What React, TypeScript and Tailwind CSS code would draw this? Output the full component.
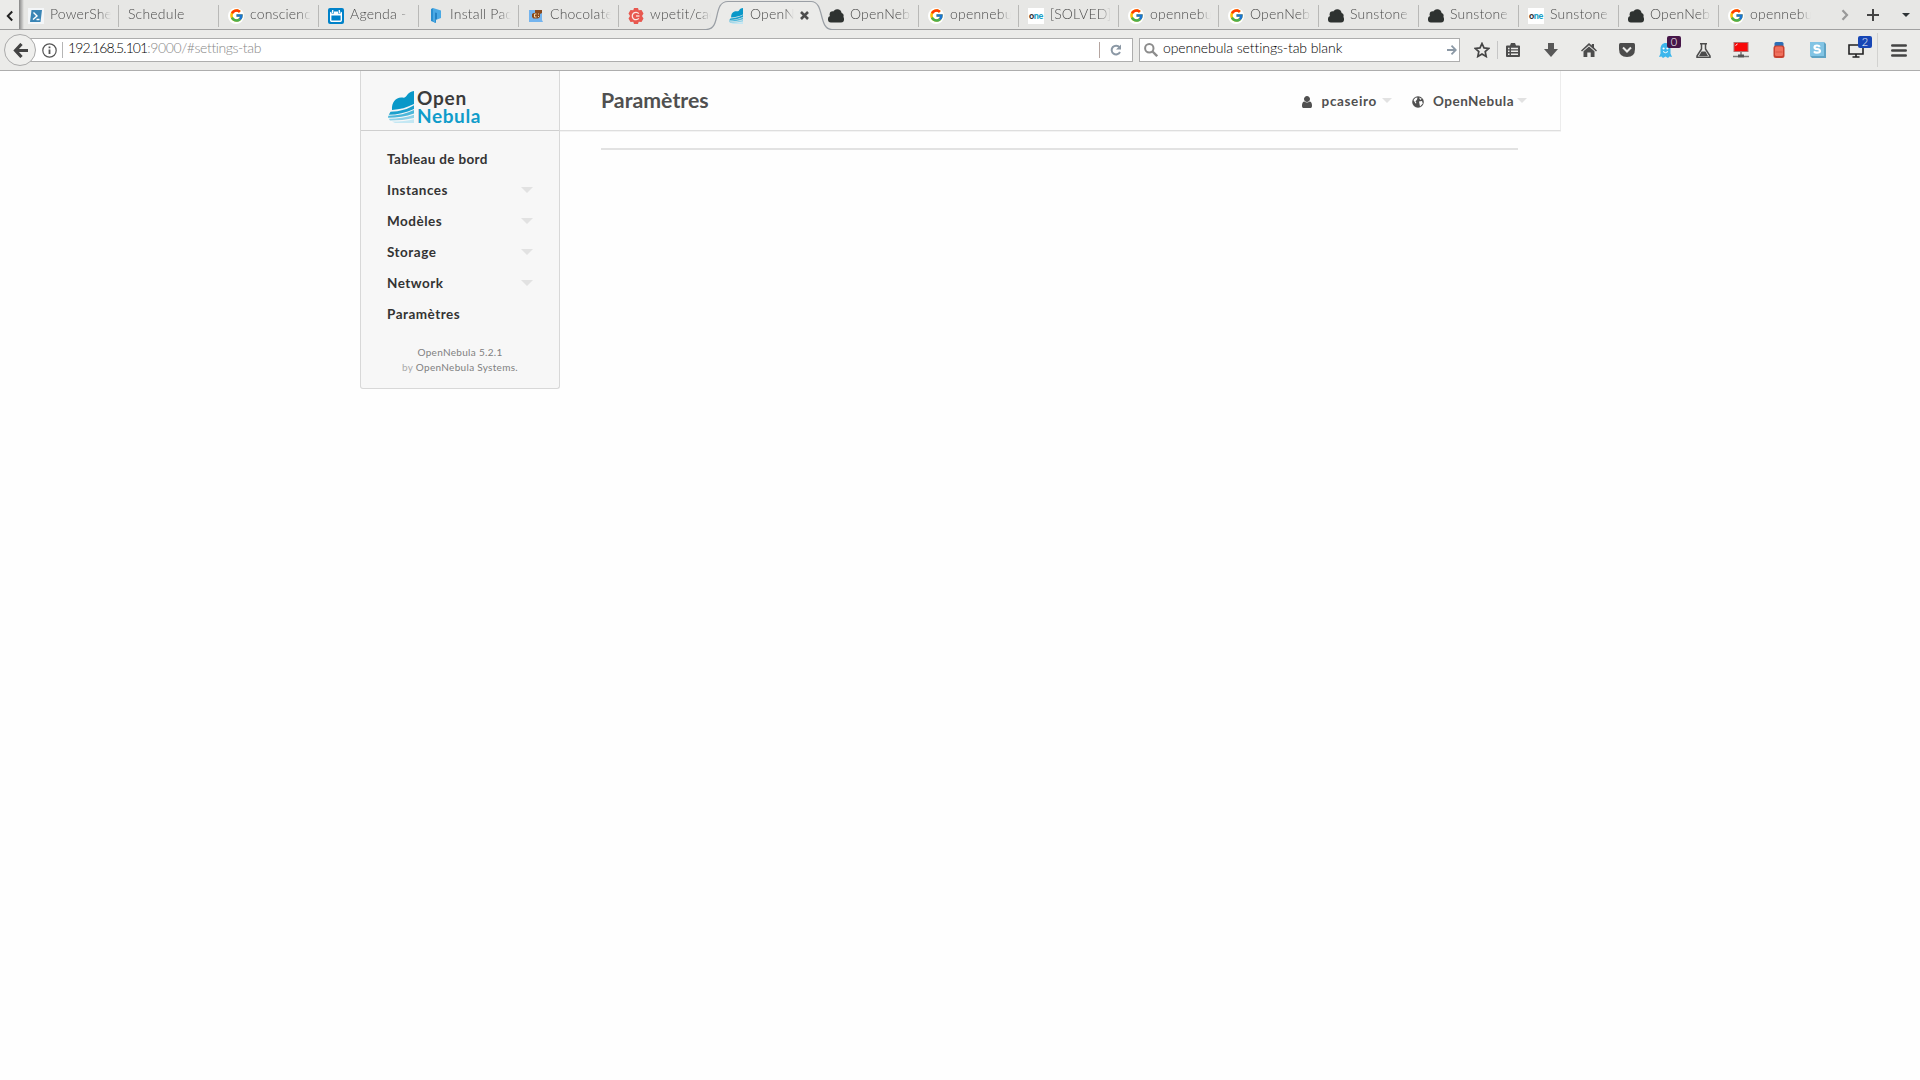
import React from "react";
import { FcGoogle } from "react-icons/fc";

type Tab = { title: string; icon?: string; active?: boolean };

const TABS: Tab[] = [
    { title: "PowerShell", icon: "powershell" },
    { title: "Schedule" },
    { title: "conscience", icon: "google" },
    { title: "Agenda - ", icon: "agenda" },
    { title: "Install Pack", icon: "puppet" },
    { title: "Chocolatey", icon: "choco" },
    { title: "wpetit/cad", icon: "hex" },
    { title: "OpenNeb", icon: "nebula", active: true },
    { title: "OpenNebu", icon: "cloud" },
    { title: "opennebul", icon: "google" },
    { title: "[SOLVED]", icon: "one" },
    { title: "opennebul", icon: "google" },
    { title: "OpenNebu", icon: "google" },
    { title: "Sunstone", icon: "cloud" },
    { title: "Sunstone", icon: "cloud" },
    { title: "Sunstone", icon: "one" },
    { title: "OpenNebu", icon: "cloud" },
    { title: "opennebul", icon: "google" },
];

const MENU = [
    { label: "Tableau de bord" },
    { label: "Instances", sub: true },
    { label: "Modèles", sub: true },
    { label: "Storage", sub: true },
    { label: "Network", sub: true },
    { label: "Paramètres" },
];

export default function App() {
    return (
        <div className="flex h-[1080px] w-[1920px] flex-col overflow-hidden bg-[#fefefe] font-['Lato',sans-serif]">
            <TabStrip />
            <NavBar />
            <Sunstone />
        </div>
    );
}

function TabStrip() {
    return (
        <div className="flex h-[30px] shrink-0 border-b border-[#a0a0a0] bg-[#e7e7e5]">
            <div className="flex w-[19px] shrink-0 items-center justify-center bg-[#ebebe9] pt-[2px]">
                <svg width="8" height="12" viewBox="0 0 8 12" fill="none" stroke="#222" strokeWidth="2">
                    <path d="M6.200 1.500 1.800 6l4.400 4.500" />
                </svg>
            </div>
            {TABS.map((tab, i) => (
                <TabItem key={i} tab={tab} index={i} />
            ))}
            <div className="flex flex-1 items-center pl-[22px] pt-px">
                <svg width="8" height="12" viewBox="0 0 8 12" fill="none" stroke="#999" strokeWidth="2.200">
                    <path d="M1.500 1.200 6 6l-4.500 4.800" />
                </svg>
                <svg className="ml-[18px]" width="12" height="12" viewBox="0 0 12 12" stroke="#444" strokeWidth="2">
                    <path d="M6 0v12M0 6h12" />
                </svg>
                <svg className="ml-[23px]" width="8" height="4" viewBox="0 0 8 4" fill="#2e3436">
                    <path d="M0 0h8L4 4z" />
                </svg>
            </div>
        </div>
    );
}

function TabItem({ tab, index }: { tab: Tab; index: number }) {
    const divider = !tab.active && TABS[index + 1] && !TABS[index + 1].active;
    return (
        <div className="relative flex h-[29px] w-[100px] shrink-0 items-center pl-[9px] pt-[2px]">
            {index === 0 && (
                <span className="absolute left-0 top-0 h-[29px] w-[5px] bg-linear-to-r from-[#858585] to-[#e7e7e5]" />
            )}
            {tab.active && (
                <svg className="absolute -left-[15px] top-0" width="132" height="30" viewBox="0 0 132 30">
                    <path d="M0 30V29.500H2C18 29.500 8 1.500 24 1.500H107C121 1.500 114 29.500 128 29.500H132V30Z" fill="#ebebe9" />
                    <path
                        d="M0 29.500H2C18 29.500 8 1.500 24 1.500H107C121 1.500 114 29.500 128 29.500H132"
                        fill="none"
                        stroke="#9a9fa5"
                        strokeWidth="1.200"
                    />
                </svg>
            )}
            {tab.icon && (
                <span className="relative mr-[6px] flex size-4 shrink-0 items-center justify-center">
                    <Favicon name={tab.icon} />
                </span>
            )}
            <span
                className={`relative -mt-[4px] overflow-hidden whitespace-nowrap text-[14px] leading-[20px] tracking-[0.2px] text-[#4c4c4c] font-light [mask-image:linear-gradient(to_right,black_80%,transparent)] ${
                    tab.active ? "w-[44px]" : tab.icon ? "w-[61px]" : "w-[80px]"
                }`}
            >
                {tab.title}
            </span>
            {tab.active && (
                <svg className="relative ml-[6px]" width="9" height="9" viewBox="0 0 9 9" stroke="#4c4c4c" strokeWidth="2.600">
                    <path d="M1 1l7 7M8 1l-7 7" />
                </svg>
            )}
            {divider && <span className="absolute right-0 top-[5px] h-[22px] w-px bg-[#b9b9b7]" />}
        </div>
    );
}

function Favicon({ name }: { name: string }) {
    switch (name) {
        case "google":
            return (
                <span className="flex size-4 items-center justify-center rounded-full bg-white">
                    <FcGoogle size={15} />
                </span>
            );
        case "cloud":
            return (
                <svg width="16" height="14" viewBox="0 0 16 14" fill="#2e3230">
                    <circle cx="9.300" cy="4.600" r="4.400" />
                    <circle cx="4.800" cy="5.500" r="3.200" />
                    <circle cx="13" cy="6.500" r="2.600" />
                    <rect x="0" y="7" width="16" height="6.500" rx="2.900" />
                </svg>
            );
        case "one":
            return (
                <span className="flex size-4 items-center justify-center bg-white text-[9px] font-black leading-none tracking-[-0.3px] text-[#333]">
                    o<span className="text-[#1a9fc6]">ne</span>
                </span>
            );
        case "powershell":
            return (
                <svg width="16" height="16" viewBox="0 0 16 16">
                    <path d="M0 0h16v16H0z" fill="#f4f6f8" />
                    <path d="M3.500 2H14l-1.500 12H2z" fill="#3a85b5" />
                    <path d="M5.500 4.500 9 8l-4 3.500M8.500 11.500h3" fill="none" stroke="#fff" strokeWidth="1.400" />
                </svg>
            );
        case "agenda":
            return (
                <svg width="16" height="16" viewBox="0 0 16 16">
                    <rect width="16" height="16" rx="2" fill="#0082c9" />
                    <rect x="2.700" y="4.200" width="10.600" height="9.100" rx="1" fill="none" stroke="#fff" strokeWidth="1.400" />
                    <path d="M2.500 4h11v3.500h-11z" fill="#fff" />
                    <path d="M4.700 2v3.500M11.300 2v3.500" stroke="#0082c9" strokeWidth="2.600" />
                    <path d="M4.700 2v3M11.300 2v3" stroke="#fff" strokeWidth="1.300" />
                </svg>
            );
        case "puppet":
            return (
                <svg width="12" height="15" viewBox="0 0 12 15">
                    <path d="M1 1l2-1v11l3 1v3l-5-2z" fill="#2a8fd0" />
                    <path d="M3 0l8 2.500V10l-4 1.500V6L5 5.500V15L3 13z" fill="#4aa9e4" />
                    <path d="M5 4.500l2 .5v6.500l-2 .5z" fill="#2583c4" />
                </svg>
            );
        case "choco":
            return (
                <svg width="14" height="14" viewBox="0 0 14 14">
                    <path d="M0 1h13v10l1 2H0z" fill="#74b4ee" />
                    <path d="M6 1h7v3l-2 1v3l-2 1.500H4.500L3 8V5l1.500-1H6z" fill="#8a4a1c" />
                    <path d="M7.500 5H5.500v3h2" fill="none" stroke="#f4d9a8" />
                    <path d="M9 4.500h1v1H9zM9 7h1v1H9z" fill="#f4d9a8" />
                </svg>
            );
        case "hex":
            return (
                <svg width="16" height="16" viewBox="0 0 16 16">
                    <path
                        d="M6 0h4l.7 2.200L13.500 2l2 3.500L14 8l1.500 2.500-2 3.500-2.800-.2L10 16H6l-.7-2.200L2.500 14l-2-3.500L2 8 .5 5.500l2-3.500 2.800.2z"
                        fill="#e8584f"
                    />
                    <path d="M10.800 5.600A3.700 3.700 0 1 0 10.800 10.400" fill="none" stroke="#fbe6e3" strokeWidth="1.300" />
                    <path d="M8 8h3.500" stroke="#fbe6e3" strokeWidth="1.300" />
                </svg>
            );
        default:
            return <NebulaMark width={14} height={16} />;
    }
}

function NebulaMark({ width, height }: { width: number; height: number }) {
    return (
        <svg className="shrink-0" width={width} height={height} viewBox="0 0 26 32" preserveAspectRatio="none">
            <path d="M4 19C3.500 11 8 6 14 6.500 17 7 18 6 19.500 3.500 21 1.500 23 .5 26 0V13C19 16.500 12 18.500 4 19z" fill="#0a98c8" />
            <path d="M2.500 20.800C12 20.300 20 18 26 14.200v3.700C18 21.800 9 23.500.8 23.800z" fill="#1ba0cd" />
            <path d="M.3 24.800C10 24.600 19 22.500 26 19v3.500C18 25.500 9 26.800 0 26.800z" fill="#4cb7da" />
            <path d="M.8 27.800C10 27.800 19 26.300 26 23.800v3.200C19 28.700 10 29.500 2 29.500z" fill="#8dd1e8" />
            <path d="M4 30.500C12 30.500 20 29.800 26 28.200V32H7z" fill="#c3e7f3" />
        </svg>
    );
}

function NavBar() {
    return (
        <div className="relative flex h-[41px] shrink-0 items-start border-b border-[#adadad] bg-[#ebebe9] pl-[30px] pt-[8px]">
            <span className="absolute left-[4px] top-[4px] z-10 flex size-[32px] items-center justify-center rounded-full border border-[#aaa] bg-[#efefed]">
                <svg width="15" height="15" viewBox="0 0 15 15" fill="none" stroke="#444" strokeWidth="3.200">
                    <path d="M8.500 1 2.500 7.500l6 6.500M2.500 7.500H15" />
                </svg>
            </span>

            {/* Barre d'adresse */}
            <div className="flex h-[24px] w-[1103px] items-center border border-[#adadad] bg-white pl-[11px]">
                <svg width="15" height="15" viewBox="0 0 15 15" fill="none" stroke="#555">
                    <circle cx="7.500" cy="7.500" r="6.700" strokeWidth="1.200" />
                    <path d="M7.500 6.500V11M7.500 3.500v1.700" strokeWidth="1.800" />
                </svg>
                <span className="ml-[5px] h-[16px] w-px bg-[#b5b5b5]" />
                <span className="-mt-[5px] ml-[5px] whitespace-nowrap text-[14px] font-light leading-[20px] tracking-[-0.9px] text-black">
                    192.168.5.101<span className="tracking-[-0.4px] text-[#888]">:9000/#settings-tab</span>
                </span>
                <span className="ml-auto h-[16px] w-px bg-[#b5a5a0]" />
                <svg className="ml-[10px] mr-[10px]" width="12" height="12" viewBox="0 0 12 12" fill="none" stroke="#8b98a5" strokeWidth="2">
                    <path d="M9.500 3.300A4.400 4.400 0 1 0 10 8" />
                    <path d="M11 .5v5H6z" fill="#8b98a5" stroke="none" />
                </svg>
            </div>

            {/* Recherche */}
            <div className="ml-[6px] flex h-[24px] w-[321px] items-center border border-[#adadad] bg-white pl-[4px]">
                <svg width="14" height="14" viewBox="0 0 14 14" fill="none" stroke="#8c8c8c" strokeWidth="2">
                    <circle cx="5.300" cy="5.300" r="4.200" />
                    <path d="M8.500 8.500l4.700 4.700" strokeWidth="2.400" />
                </svg>
                <span className="-mt-[5px] ml-[5px] whitespace-nowrap text-[14px] font-light leading-[20px] tracking-[-0.080px] text-black">
                    opennebula settings-tab blank
                </span>
                <svg className="ml-auto mr-[2px]" width="10" height="10" viewBox="0 0 10 10" fill="none" stroke="#8b98a5" strokeWidth="1.800">
                    <path d="M0 5h8.500M4.500.7 8.800 5 4.500 9.300" />
                </svg>
            </div>

            <Toolbar />
        </div>
    );
}

function Toolbar() {
    return (
        <div className="flex h-[24px] items-center">
            <svg className="ml-[14px]" width="16" height="16" viewBox="0 0 16 16" fill="none" stroke="#444" strokeWidth="1.700">
                <path d="M8 1.500l2 4.400 4.800.5-3.600 3.200 1 4.900L8 12l-4.200 2.500 1-4.900L1.200 6.400 6 5.900z" />
            </svg>
            <span className="ml-[7px] h-[18px] w-px bg-[#c6c6c6]" />
            <svg className="ml-[8px]" width="14" height="14" viewBox="0 0 14 14">
                <path d="M1 2.500h3L5 0h4l1 2.500h3q1 0 1 1V13q0 1-1 1H1q-1 0-1-1V3.500q0-1 1-1z" fill="#4c4c4c" />
                <path d="M2 5.500h1.500M5 5.500h7M2 8.300h1.500M5 8.300h7M2 11.200h1.500M5 11.200h7" stroke="#ebebe9" strokeWidth="1.500" />
            </svg>
            <svg className="ml-[24px]" width="14" height="14" viewBox="0 0 14 14" fill="#585858">
                <path d="M4 0h6v6h4l-7 8-7-8h4z" />
            </svg>
            <svg className="ml-[23px]" width="16" height="14" viewBox="0 0 16 14" fill="#4c4c4c">
                <path d="M8 0l2.800 2.500V1H13v3.500l3 3-1 1L8 2.300 1 8.500l-1-1z" />
                <path d="M2.500 8.300 8 3.500l5.500 4.800V14H9.700V9.500H6.300V14H2.500z" />
            </svg>
            <svg className="ml-[22px]" width="16" height="14" viewBox="0 0 16 14">
                <path d="M1.500 0h13Q16 0 16 1.500V6q0 8-8 8T0 6V1.500Q0 0 1.500 0z" fill="#4c4c4c" />
                <path d="M4 4.500l4 4 4-4" fill="none" stroke="#ebebe9" strokeWidth="2" />
            </svg>
            <span className="relative ml-[24px] h-[15px] w-[13px]">
                <svg width="13" height="15" viewBox="0 0 13 15">
                    <path d="M1.500 6C1.500-2 11.500-2 11.500 6v4.500L13 14l-2.500-.5L9 15l-2.500-1.500L4 15l-1.500-1.500L0 14l1.500-3.500z" fill="#3cb6ec" />
                    <circle cx="4.600" cy="5.500" r="1.100" fill="#fff" />
                    <circle cx="8.400" cy="5.500" r="1.100" fill="#fff" />
                    <path d="M4 8.500q2.500 2.500 5 0" stroke="#fff" fill="none" />
                </svg>
                <Badge text="0" className="left-[8px] bg-[#461648]" />
            </span>
            <svg className="ml-[24px]" width="15" height="15" viewBox="0 0 15 15" fill="none" stroke="#4c4c4c" strokeWidth="1.500">
                <path d="M4 .8h7M5.500 1v5L1 13v1.200h13V13L9.500 6V1" />
                <path d="M3 13l2.500-4.500h4L12 13z" fill="#4c4c4c" stroke="none" />
            </svg>
            <svg className="ml-[22px]" width="16" height="16" viewBox="0 0 16 16">
                <rect x="1" y=".5" width="14" height="9" fill="#f80808" stroke="#b07070" />
                <path d="M2.500 3.500 4.500 2" stroke="#fff" />
                <path d="M8 10v3M0 14.500h5M11 14.500h5" stroke="#777" strokeWidth="1.500" />
                <path d="M5 12.500h6v3H5z" fill="#555" />
            </svg>
            <svg className="ml-[24px]" width="12" height="16" viewBox="0 0 12 16">
                <rect x="1.500" y="0" width="9" height="5" rx="1.500" fill="#2d6eb5" />
                <rect x=".5" y="3.500" width="11" height="12.500" rx="2.500" fill="#c8402f" />
                <rect x="2" y="4.500" width="8" height="9.500" rx="1.500" fill="#f0705d" />
                <path d="M2.500 10h7" stroke="#dc5443" />
            </svg>
            <svg className="ml-[25px]" width="16" height="16" viewBox="0 0 16 16">
                <path d="M0 0h14l2 2v14H2l-2-2z" fill="#5fa3c4" />
                <path d="M0 0h14v14H0z" fill="#82c4e4" />
                <path d="M9.800 4.800Q9 3.500 7 3.500q-2.500 0-2.500 1.700T7 7q3 .3 3 2t-3 1.700q-2 0-3-1.400" fill="none" stroke="#fff" strokeWidth="2.200" />
            </svg>
            <span className="relative ml-[22px] h-[15px] w-[16px]">
                <svg width="16" height="15" viewBox="0 0 16 15" fill="none" stroke="#222" strokeWidth="1.600">
                    <path d="M1 2h14v9H1zM8 11v3M4.500 14h7" />
                </svg>
                <Badge text="2" className="left-[10px] bg-[#1746b5]" />
            </span>
            <span className="ml-[13px] h-[34px] w-px bg-[#d2d2d0]" />
            <svg className="ml-[13px]" width="16" height="13" viewBox="0 0 16 13" stroke="#444" strokeWidth="2.600" strokeLinecap="round">
                <path d="M1.300 1.500h13.400M1.300 6.500h13.400M1.300 11.500h13.400" />
            </svg>
        </div>
    );
}

function Badge({ text, className }: { text: string; className: string }) {
    return (
        <span
            className={`absolute -top-[7px] flex h-[12px] w-[14px] items-center justify-center rounded-[2px] text-[11px] font-light leading-none text-white ${className}`}
        >
            {text}
        </span>
    );
}

function Caret({ small, className = "" }: { small?: boolean; className?: string }) {
    return (
        <svg className={className} width={small ? 10 : 12} height={small ? 5 : 6} viewBox="0 0 12 6" fill="#e2e2e2">
            <path d="M0 0h12L6 6z" />
        </svg>
    );
}

function Sunstone() {
    return (
        <div className="ml-[360px] flex w-[1201px] items-start">
            <aside className="w-[200px] shrink-0 rounded-b-[3px] border border-t-0 border-[#d8d8d8] bg-[#f7f7f7]">
                <div className="flex h-[60px] border-b border-[#cfcfcf] pl-[27px] pt-[20px]">
                    <NebulaMark width={26} height={32} />
                    <div className="-mt-[2px] ml-[3px] flex flex-col text-[19px] font-bold leading-[18px] text-[#3b3b3b]">
                        <span className="tracking-[0.8px]">Open</span>
                        <span className="tracking-[0.6px] text-[#0f9cca]">Nebula</span>
                    </div>
                </div>
                <nav className="pt-[13px]">
                    {MENU.map((item) => (
                        <div
                            key={item.label}
                            className="flex h-[31px] items-center justify-between px-[26px] text-[13.500px] font-bold tracking-[0.5px] text-[#333] first:tracking-[0.35px]"
                        >
                            {item.label}
                            {item.sub && <Caret className="-mt-px" />}
                        </div>
                    ))}
                </nav>
                <footer className="h-[58px] pt-[15px] text-center text-[10px] leading-[15px] tracking-[0.3px] text-[#808080]">
                    OpenNebula 5.2.1
                    <br />
                    <span className="text-[#aaa]">by</span> OpenNebula Systems.
                </footer>
            </aside>

            <main className="flex-1">
                <header className="flex h-[60px] items-center border-b border-r border-b-[#dedede] border-r-[#ececec] pl-[41px] pr-[33px] text-[#505050] shadow-[0_1px_0_#f3f3f3]">
                    <h1 className="text-[21.300px] font-bold">Paramètres</h1>
                    <div className="ml-auto flex items-center pt-[2px] text-[13.500px] font-bold tracking-[0.5px]">
                        <svg className="mt-px" width="10" height="12" viewBox="0 0 1280 1536" fill="#505050">
                            <path d="M1280 1271q0 109-62.500 187t-150.500 78h-854q-88 0-150.500-78t-62.500-187q0-85 8.500-160.500t31.500-152 58.500-131 94-89 134.500-34.500q131 128 313 128t313-128q76 0 134.500 34.500t94 89 58.500 131 31.500 152 8.500 160.500zM1024 384q0 159-112.500 271.500T640 768 368.500 655.500 256 384 368.500 112.500 640 0t271.500 112.500T1024 384z" />
                        </svg>
                        <span className="ml-[10px] tracking-[0.65px]">pcaseiro</span>
                        <Caret small className="-mt-[3px] ml-[5px]" />
                        <Globe />
                        <span className="ml-[9px]">OpenNebula</span>
                        <Caret small className="-mt-[3px] ml-[3px]" />
                    </div>
                </header>
                <div className="ml-[41px] mt-[17px] h-[2px] w-[917px] bg-[#e2e2e2]" />
            </main>
        </div>
    );
}

function Globe() {
    return (
        <svg className="ml-[20px]" width="12" height="12" viewBox="0 0 12 12">
            <circle cx="6" cy="6" r="5.800" fill="#505050" />
            <path d="M1.500 4 3.500 1.800 5.500 1.500 5 3.500 3.500 5.500 4.500 7 3.500 7.500zM7 5.500l3-.5.8 2.500L8 10.500 7.500 8zM7 1.500l2.800 1.300-1.500 1.200z" fill="#fdfdfd" />
        </svg>
    );
}
